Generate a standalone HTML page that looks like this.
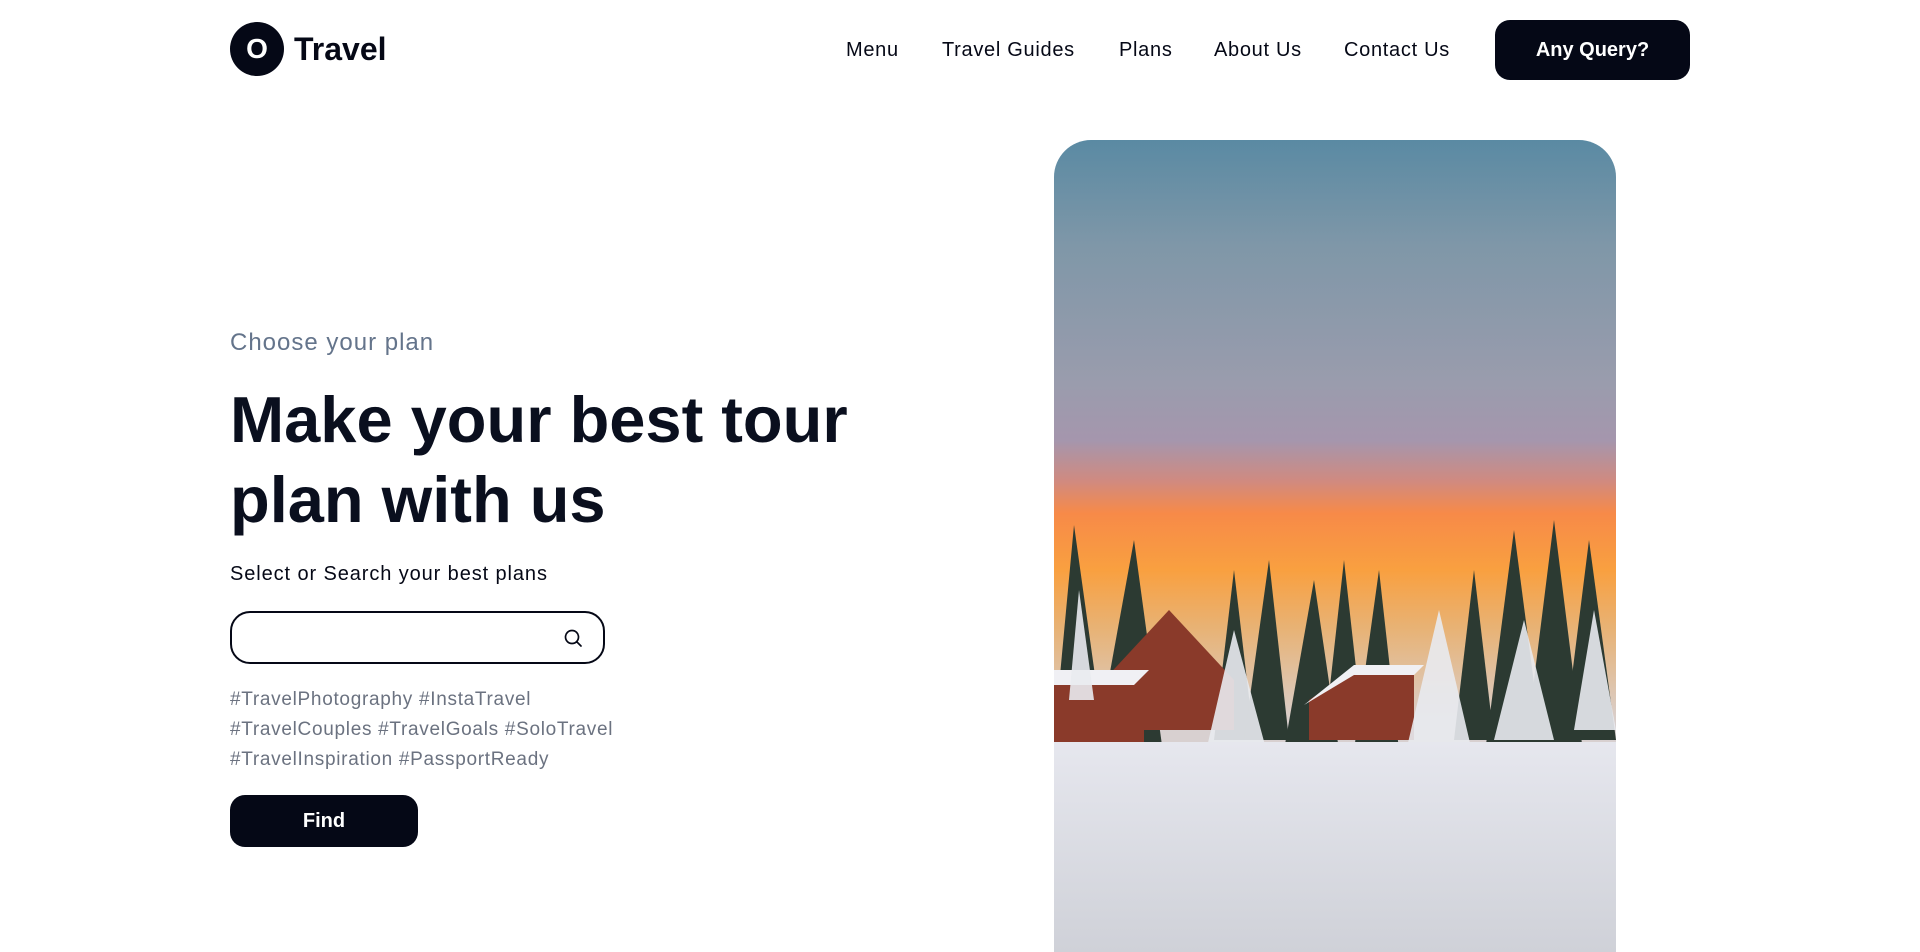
<!DOCTYPE html>
<html><head><meta charset="utf-8"><style>
*{margin:0;padding:0;box-sizing:border-box}
html{width:1920px;height:952px;overflow:hidden}
body{width:1920px;height:952px;overflow:hidden;background:#fff;font-family:"Liberation Sans",sans-serif;color:#050816;position:relative}
.abs{position:absolute}
.logo{left:230px;top:22px;width:54px;height:54px;border-radius:50%;background:#050816;color:#fff;font-weight:700;font-size:28px;display:flex;align-items:center;justify-content:center}
.brand{left:294px;top:29px;font-size:32px;font-weight:600;line-height:40px}
.nav{top:38px;font-size:20px;line-height:24px;color:#050816;letter-spacing:0.7px}
.btn{background:#050816;color:#fff;font-weight:700;display:flex;align-items:center;justify-content:center}
</style></head><body>
<div class="abs logo">O</div>
<div class="abs brand">Travel</div>
<div class="abs nav" style="left:846px">Menu</div>
<div class="abs nav" style="left:942px">Travel Guides</div>
<div class="abs nav" style="left:1119px">Plans</div>
<div class="abs nav" style="left:1214px">About Us</div>
<div class="abs nav" style="left:1344px">Contact Us</div>
<div class="abs btn" style="left:1495px;top:20px;width:195px;height:60px;border-radius:15px;font-size:20px">Any Query?</div>

<div class="abs" style="left:230px;top:329px;font-size:24px;color:#64748b;letter-spacing:1px">Choose your plan</div>
<div class="abs" style="left:230px;top:380px;font-size:65px;font-weight:700;line-height:80px;color:#0a0f1e;letter-spacing:0px">Make your best tour<br>plan with us</div>
<div class="abs" style="left:230px;top:563px;font-size:20px;letter-spacing:0.9px">Select or Search your best plans</div>
<div class="abs" style="left:230px;top:611px;width:375px;height:53px;border:2px solid #050816;border-radius:20px"></div>
<svg class="abs" style="left:562px;top:627px" width="22" height="22" viewBox="0 0 22 22"><circle cx="10" cy="10" r="6.5" fill="none" stroke="#050816" stroke-width="1.7"/><path d="M15 15l4 4" stroke="#050816" stroke-width="1.7" stroke-linecap="round"/></svg>
<div class="abs" style="left:230px;top:685px;font-size:19px;line-height:30px;color:#6b7280;letter-spacing:0.7px">#TravelPhotography #InstaTravel<br>#TravelCouples #TravelGoals #SoloTravel<br>#TravelInspiration #PassportReady</div>
<div class="abs btn" style="left:230px;top:795px;width:188px;height:52px;border-radius:15px;font-size:20px">Find</div>

<div class="abs" style="left:1054px;top:140px;width:562px;height:812px;border-radius:37px 37px 0 0;overflow:hidden">
<svg width="562" height="812" viewBox="0 0 562 812" style="display:block">
<defs><linearGradient id="s" x1="0" y1="0" x2="0" y2="1">
<stop offset="0" stop-color="#5a8aa3"/><stop offset="0.13" stop-color="#7f97a8"/><stop offset="0.3" stop-color="#9a9cad"/><stop offset="0.37" stop-color="#a596ad"/><stop offset="0.42" stop-color="#d08a80"/><stop offset="0.46" stop-color="#f78a48"/><stop offset="0.53" stop-color="#f9a040"/><stop offset="0.6" stop-color="#e8b274"/><stop offset="0.72" stop-color="#d8d0d0"/></linearGradient>
<linearGradient id="g" x1="0" y1="0" x2="0" y2="1"><stop offset="0" stop-color="#e6e7ee"/><stop offset="1" stop-color="#cfd1d8"/></linearGradient></defs>
<rect width="562" height="812" fill="url(#s)"/>
<g fill="#2c3a32">
<path d="M0 600L20 385L50 600Z"/><path d="M40 620L80 400L110 620Z"/><path d="M160 600L180 430L200 600Z"/><path d="M190 600L215 420L235 600Z"/><path d="M230 610L260 440L285 610Z"/><path d="M270 600L290 420L310 600Z"/><path d="M300 610L325 430L345 610Z"/><path d="M400 600L420 430L440 600Z"/><path d="M430 620L460 390L490 620Z"/><path d="M470 620L500 380L530 620Z"/><path d="M510 600L535 400L562 600Z"/>
</g>
<path d="M50 540L115 470L180 540V590H50Z" fill="#8a3a2a"/><path d="M0 540H90V610H0Z" fill="#8a3a2a"/><path d="M0 530H95L80 545H0Z" fill="#f0f0f4"/>
<path d="M255 560L300 530H360V600H255Z" fill="#8a3a2a"/><path d="M250 565L300 525H370L360 535H300Z" fill="#f0f0f4"/>
<g fill="#e9ebf0" opacity="0.9"><path d="M150 620L180 490L215 620Z"/><path d="M350 620L385 470L420 620Z"/><path d="M440 600L470 480L500 600Z"/><path d="M15 560L25 450L40 560Z"/><path d="M520 590L540 470L562 590Z"/></g>
<rect x="0" y="602" width="562" height="210" fill="url(#g)"/>
</svg></div>
</body></html>
